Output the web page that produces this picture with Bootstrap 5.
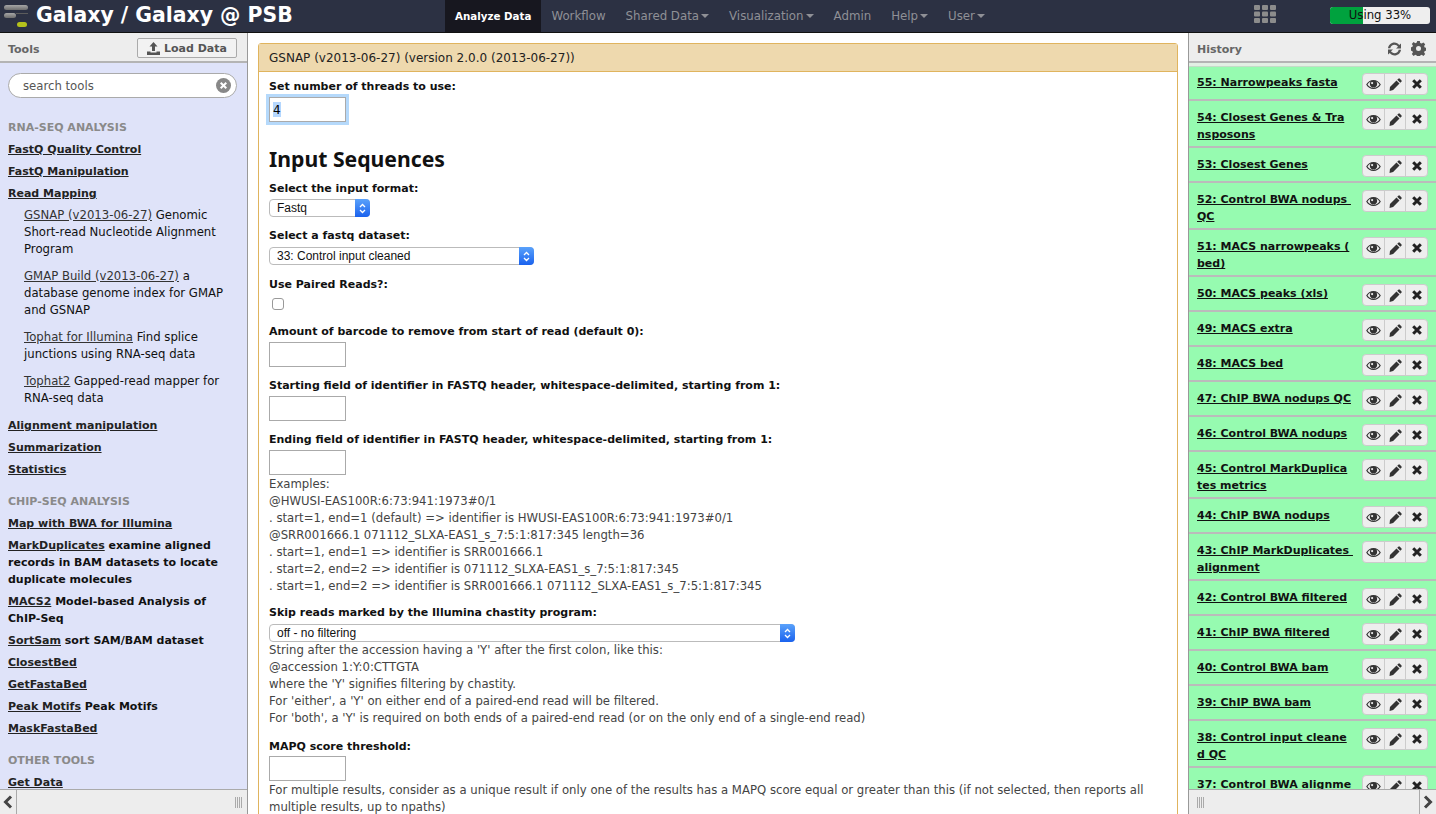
<!DOCTYPE html>
<html lang="en">
<head>
  <meta charset="UTF-8" />
  <title>Galaxy / Galaxy @ PSB</title>
  <link href="https://cdn.jsdelivr.net/npm/bootstrap@5.3.3/dist/css/bootstrap.min.css" rel="stylesheet" />
  <style>
    html, body { height: 100%; }
    body { font-family: "DejaVu Sans", "Noto Sans", sans-serif; font-size: 11.7px; line-height: 17px; color: #111; overflow: hidden; display: flex; flex-direction: column; }

    /* masthead */
    .gx-top { height: 33px; flex: none; background: #2c3143; border-bottom: 1px solid #111; padding: 0; align-items: flex-start; flex-wrap: nowrap; }
    .gx-logo { margin: 4px 8px 0 4px; flex: none; }
    .gx-brand { width: 409px; flex: none; font-size: 20.4px; line-height: 30px; font-weight: 700; color: #fff; white-space: nowrap; }
    .gx-top .navbar-nav .nav-link { height: 32px; padding: 8px 10px 6px; font-size: 11.8px; line-height: 17px; color: #8f9096; white-space: nowrap; }
    .gx-top .navbar-nav .nav-link.active { background: #17171f; color: #fff; font-weight: 700; font-size: 10.3px; }
    .gx-top .dropdown-toggle::after { border-top-width: 4px; border-left-width: 4px; border-right-width: 4px; margin-left: 2px; vertical-align: 2px; }
    .gx-grid { margin-left: auto; margin-top: 5px; flex: none; }
    .gx-quota { width: 100px; height: 17px; margin: 7px 6px 0 54px; flex: none; position: relative; background: #eee; border-radius: 3px; }
    .gx-quota .progress-bar { background: #00a23e; }
    .gx-quota-label { position: absolute; inset: 0; text-align: center; line-height: 17px; color: #111; font-size: 11.7px; }

    /* three columns */
    .gx-cols { flex: 1; min-height: 0; }
    .gx-side { width: 248px; flex: none; display: flex; flex-direction: column; min-height: 0; }
    .gx-side-left { border-right: 1px solid #999; }
    .gx-side-right { width: 248px; border-left: 1px solid #999; }
    .gx-head { height: 30px; flex: none; background: #ededed; border-bottom: 2px solid #b4b4b4; padding: 4px 10px 0 8px; font-size: 11px; font-weight: 700; color: #666; }
    .gx-loadbtn { width: 100px; height: 20px; padding: 0; margin-top: -2px; font-size: 11px; line-height: 17px; font-weight: 700; color: #555; background: #f2f2f2; border: 1px solid #aaa; border-radius: 2px; }
    .gx-hicons { margin-top: -1px; gap: 9px; }
    .gx-foot { height: 25px; flex: none; background: #ededed; border-top: 1px solid #aaa; }
    .gx-arrow { width: 17px; color: #444; }
    .gx-arrow-l { border-right: 1px solid #aaa; }
    .gx-arrow-r { border-left: 1px solid #aaa; }

    /* tools */
    .gx-tools { flex: 1; min-height: 0; overflow: hidden; background: #dfe3f9; padding: 10px 10px 0 8px; }
    .gx-search { height: 25px; margin-bottom: 21px; border: 1px solid #aaa; border-radius: 13px; background: #fff; padding: 0 5px 0 14px; color: #555; }
    .gx-search span { padding-top: 1px; }
    .gx-tools h6 { font-size: 11px; line-height: 17px; font-weight: 700; color: #8a8a8a; text-transform: uppercase; margin: 0 0 5px; }
    .gx-tools a { color: #222; }
    .gx-sect { margin-bottom: 5px; font-size: 11px; font-weight: 700; }
    .gx-tool { margin: 0 0 10px 16px; }
    .gx-tool a { color: #333; }
    .gx-tools h6.gx-sect-gap { margin-top: 15px; }

    /* centre */
    .gx-main { flex: 1; min-width: 0; background: #fff; padding: 10px 10px 0; overflow: hidden; }
    .gx-panel { height: 1000px; border: 1px solid #e0b45e; border-radius: 3px 3px 0 0; }
    .gx-panel-head { height: 28px; background: #eed9ae; border-bottom: 1px solid #e0b45e; padding: 6px 10px 4px; font-size: 12px; color: #222; }
    .gx-panel-body { padding: 6px 10px; }
    .gx-label { display: block; font-size: 11px; font-weight: 700; margin: 0 0 2px; color: #111; }
    .gx-field { margin-bottom: 10px; }
    .gx-field-sel { margin-bottom: 11px; }
    .gx-field-check { margin-bottom: 13px; }
    .gx-field-skip { margin-bottom: 9px; }
    .gx-label-tight { margin-bottom: 1px; }
    .gx-input { display: block; width: 77px; height: 25px; border: 1px solid #aaa; border-radius: 0; padding: 1px 3px; font-size: 12px; outline: 0; }
    .gx-input-focus { box-shadow: 0 0 0 3px #b5d9fb; background: #fff linear-gradient(#b5d7fe, #b5d7fe) no-repeat 3px 4px / 8px 15px; }
    .gx-title { font-family: "Noto Sans", sans-serif; font-size: 21.2px; line-height: 28px; font-weight: 700; margin: 23px 0 7px; color: #111; }
    .gx-help { color: #444; line-height: 17px; }
    .gx-help-gap { margin-top: 1px; }
    .gx-selwrap { position: relative; height: 18px; margin-top: 2px; }
    .gx-select { width: 100%; height: 18px; display: block; padding: 0 20px 0 7px; font-family: "Liberation Sans", sans-serif; font-size: 12px; line-height: 16px; color: #111; border: 1px solid #bbb; border-radius: 4px; background: #fff; appearance: none; }
    .gx-selbtn { position: absolute; right: 0; top: 0; width: 15px; height: 18px; border-radius: 0 4px 4px 0; background: linear-gradient(#5aa2fb, #1a62ee); display: flex; align-items: center; justify-content: center; }
    .gx-w-fmt { width: 101px; }
    .gx-w-data { width: 265px; margin-top: 3px; }
    .gx-w-skip { width: 526px; margin-top: 3px; }
    .gx-check { display: block; width: 12px; height: 12px; margin: 5px 0 0 3px; border: 1px solid #999; border-radius: 3px; appearance: none; background: #fff; }

    /* history */
    .gx-hist { flex: 1; min-height: 0; overflow: hidden; background: #96fbb0; border-top: 3px solid #e2efe4; }
    .gx-item { padding: 7px 8px 4px 8px; border-bottom: 2px solid #bbb; }
    .gx-item:first-child { padding-top: 6px; border-top: 1px solid #c4dcc8; }
    .gx-item a { color: #111; font-size: 11px; font-weight: 700; text-decoration: underline; flex: 1; min-width: 0; margin: 1px 0 -1px; }
    .gx-btns { flex: none; width: 66px; height: 22px; margin-left: 5px; background: #eee; border: 1px solid #ccc; border-radius: 4px; }
    .gx-btns span { flex: 1; display: flex; align-items: center; justify-content: center; border-left: 1px solid #ccc; }
    .gx-btns span:first-child { border-left: 0; }
  </style>
</head>
<body>
  <svg width="0" height="0" class="position-absolute">
    <symbol id="i-eye" viewBox="0 0 16 12"><path fill="#333" d="M8 1C4.600 1 1.800 3 0 6c1.800 3 4.600 5 8 5s6.200-2 8-5c-1.800-3-4.600-5-8-5zm0 8.800C5.500 9.800 3 8.400 1.500 6 2.400 4.500 3.600 3.500 5 2.800 4.400 3.500 4 4.400 4 5.400c0 2.200 1.800 4 4 4s4-1.800 4-4c0-1-.4-1.900-1-2.600 1.400.7 2.600 1.700 3.500 3.200C13 8.400 10.500 9.800 8 9.800zM6.500 3.200a1.200 1.200 0 1 1 0 2.400 1.200 1.200 0 0 1 0-2.400z"/></symbol>
    <symbol id="i-pen" viewBox="0 0 12 12"><path fill="#333" d="M8.600.6a1 1 0 0 1 1.400 0l1.400 1.400a1 1 0 0 1 0 1.400l-1 1L7.600 1.600zM6.900 2.300l2.800 2.800-5.900 5.900L.5 11.900.9 8.300z"/></symbol>
    <symbol id="i-x" viewBox="0 0 10 10"><path fill="none" stroke="#222" stroke-width="3" d="M1.200 1.200l7.600 7.600M8.800 1.200L1.200 8.800"/></symbol>
  </svg>

  <nav class="navbar navbar-expand gx-top">
    <svg class="gx-logo" width="24" height="24" viewBox="0 0 24 24">
      <defs><linearGradient id="gx-bar" x1="0" y1="0" x2="0" y2="1"><stop offset="0" stop-color="#a6a6a6"/><stop offset="1" stop-color="#6e6e6e"/></linearGradient></defs>
      <rect x="0" y="1" width="24" height="5" rx="2.500" fill="url(#gx-bar)"/>
      <rect x="0" y="9" width="12" height="5" rx="2.500" fill="url(#gx-bar)"/>
      <rect x="12" y="9" width="12" height="1" fill="#5c5c5c"/>
      <rect x="13" y="18" width="10" height="5" rx="2.500" fill="#b5c21c"/>
    </svg>
    <div class="gx-brand">Galaxy / Galaxy @ PSB</div>
    <ul class="navbar-nav">
      <li class="nav-item"><a class="nav-link active" href="#">Analyze Data</a></li>
      <li class="nav-item"><a class="nav-link" href="#">Workflow</a></li>
      <li class="nav-item"><a class="nav-link dropdown-toggle" href="#">Shared Data</a></li>
      <li class="nav-item"><a class="nav-link dropdown-toggle" href="#">Visualization</a></li>
      <li class="nav-item"><a class="nav-link" href="#">Admin</a></li>
      <li class="nav-item"><a class="nav-link dropdown-toggle" href="#">Help</a></li>
      <li class="nav-item"><a class="nav-link dropdown-toggle" href="#">User</a></li>
    </ul>
    <svg class="gx-grid" width="22" height="18" viewBox="0 0 22 18" fill="#8c8c8c">
      <rect x="0" y="0" width="6" height="5" rx="1"/><rect x="8" y="0" width="6" height="5" rx="1"/><rect x="16" y="0" width="6" height="5" rx="1"/>
      <rect x="0" y="6.500" width="6" height="5" rx="1"/><rect x="8" y="6.500" width="6" height="5" rx="1"/><rect x="16" y="6.500" width="6" height="5" rx="1"/>
      <rect x="0" y="13" width="6" height="5" rx="1"/><rect x="8" y="13" width="6" height="5" rx="1"/><rect x="16" y="13" width="6" height="5" rx="1"/>
    </svg>
    <div class="progress gx-quota">
      <div class="progress-bar" style="width: 33%"></div>
      <div class="gx-quota-label">Using 33%</div>
    </div>
  </nav>

  <div class="d-flex gx-cols">
    <aside class="gx-side gx-side-left">
      <div class="gx-head d-flex align-items-center justify-content-between">
        <span>Tools</span>
        <button class="btn gx-loadbtn d-flex align-items-center justify-content-center gap-1" type="button">
          <svg width="13" height="13" viewBox="0 0 13 13"><path fill="#555" d="M6.500 0L2.500 4.500H5V9H8V4.500H10.500zM0 9.500h3.500v1h6v-1H13V13H0z"/></svg>
          Load Data
        </button>
      </div>
      <div class="gx-tools">
        <div class="gx-search d-flex align-items-center justify-content-between">
          <span>search tools</span>
          <svg width="15" height="15" viewBox="0 0 15 15"><circle cx="7.500" cy="7.500" r="7.500" fill="#888"/><path stroke="#fff" stroke-width="2" d="M4.700 4.700l5.600 5.600M10.300 4.700l-5.600 5.600"/></svg>
        </div>
        <h6>RNA-Seq Analysis</h6>
        <div class="gx-sect"><a href="#">FastQ Quality Control</a></div>
        <div class="gx-sect"><a href="#">FastQ Manipulation</a></div>
        <div class="gx-sect"><a href="#">Read Mapping</a></div>
        <div class="gx-tool"><a href="#">GSNAP (v2013-06-27)</a> Genomic Short-read Nucleotide Alignment Program</div>
        <div class="gx-tool"><a href="#">GMAP Build (v2013-06-27)</a> a database genome index for GMAP and GSNAP</div>
        <div class="gx-tool"><a href="#">Tophat for Illumina</a> Find splice junctions using RNA-seq data</div>
        <div class="gx-tool"><a href="#">Tophat2</a> Gapped-read mapper for RNA-seq data</div>
        <div class="gx-sect"><a href="#">Alignment manipulation</a></div>
        <div class="gx-sect"><a href="#">Summarization</a></div>
        <div class="gx-sect"><a href="#">Statistics</a></div>
        <h6 class="gx-sect-gap">ChIP-Seq Analysis</h6>
        <div class="gx-sect"><a href="#">Map with BWA for Illumina</a></div>
        <div class="gx-sect"><a href="#">MarkDuplicates</a> examine aligned records in BAM datasets to locate duplicate molecules</div>
        <div class="gx-sect"><a href="#">MACS2</a> Model-based Analysis of ChIP-Seq</div>
        <div class="gx-sect"><a href="#">SortSam</a> sort SAM/BAM dataset</div>
        <div class="gx-sect"><a href="#">ClosestBed</a></div>
        <div class="gx-sect"><a href="#">GetFastaBed</a></div>
        <div class="gx-sect"><a href="#">Peak Motifs</a> Peak Motifs</div>
        <div class="gx-sect"><a href="#">MaskFastaBed</a></div>
        <h6 class="gx-sect-gap">Other Tools</h6>
        <div class="gx-sect"><a href="#">Get Data</a></div>
      </div>
      <div class="gx-foot d-flex justify-content-between align-items-stretch">
        <div class="gx-arrow gx-arrow-l d-flex align-items-center justify-content-center">
          <svg width="10" height="14" viewBox="0 0 10 14"><path fill="none" stroke="#444" stroke-width="3" d="M8 1.500L2.500 7 8 12.500"/></svg>
        </div>
        <svg class="align-self-center me-1" width="8" height="11" viewBox="0 0 8 11"><path stroke="#aaa" d="M.5 0v11M2.500 0v11M4.500 0v11M6.500 0v11"/></svg>
      </div>
    </aside>

    <main class="gx-main">
      <div class="gx-panel">
        <div class="gx-panel-head">GSNAP (v2013-06-27) (version 2.0.0 (2013-06-27))</div>
        <form class="gx-panel-body">
          <div><label class="gx-label">Set number of threads to use:</label>
            <input class="gx-input gx-input-focus" type="text" value="4" /></div>
          <h3 class="gx-title">Input Sequences</h3>
          <div class="gx-field"><label class="gx-label">Select the input format:</label>
            <div class="gx-selwrap gx-w-fmt"><select class="gx-select"><option>Fastq</option></select><span class="gx-selbtn"><svg width="7" height="11" viewBox="0 0 7 11"><path fill="none" stroke="#fff" stroke-width="1.300" d="M1 4l2.500-2.500L6 4M1 7l2.500 2.500L6 7"/></svg></span></div></div>
          <div class="gx-field-sel"><label class="gx-label">Select a fastq dataset:</label>
            <div class="gx-selwrap gx-w-data"><select class="gx-select"><option>33: Control input cleaned</option></select><span class="gx-selbtn"><svg width="7" height="11" viewBox="0 0 7 11"><path fill="none" stroke="#fff" stroke-width="1.300" d="M1 4l2.500-2.500L6 4M1 7l2.500 2.500L6 7"/></svg></span></div></div>
          <div class="gx-field-check"><label class="gx-label">Use Paired Reads?:</label>
            <input class="gx-check" type="checkbox" /></div>
          <div class="gx-field"><label class="gx-label">Amount of barcode to remove from start of read (default 0):</label>
            <input class="gx-input" type="text" /></div>
          <div class="gx-field"><label class="gx-label">Starting field of identifier in FASTQ header, whitespace-delimited, starting from 1:</label>
            <input class="gx-input" type="text" /></div>
          <div class="gx-field-skip"><label class="gx-label">Ending field of identifier in FASTQ header, whitespace-delimited, starting from 1:</label>
            <input class="gx-input" type="text" />
            <div class="gx-help gx-help-gap">Examples:<br>@HWUSI-EAS100R:6:73:941:1973#0/1<br>. start=1, end=1 (default) =&gt; identifier is HWUSI-EAS100R:6:73:941:1973#0/1<br>@SRR001666.1 071112_SLXA-EAS1_s_7:5:1:817:345 length=36<br>. start=1, end=1 =&gt; identifier is SRR001666.1<br>. start=2, end=2 =&gt; identifier is 071112_SLXA-EAS1_s_7:5:1:817:345<br>. start=1, end=2 =&gt; identifier is SRR001666.1 071112_SLXA-EAS1_s_7:5:1:817:345</div></div>
          <div class="gx-field-sel"><label class="gx-label">Skip reads marked by the Illumina chastity program:</label>
            <div class="gx-selwrap gx-w-skip"><select class="gx-select"><option>off - no filtering</option></select><span class="gx-selbtn"><svg width="7" height="11" viewBox="0 0 7 11"><path fill="none" stroke="#fff" stroke-width="1.300" d="M1 4l2.500-2.500L6 4M1 7l2.500 2.500L6 7"/></svg></span></div>
            <div class="gx-help">String after the accession having a 'Y' after the first colon, like this:<br>@accession 1:Y:0:CTTGTA<br>where the 'Y' signifies filtering by chastity.<br>For 'either', a 'Y' on either end of a paired-end read will be filtered.<br>For 'both', a 'Y' is required on both ends of a paired-end read (or on the only end of a single-end read)</div></div>
          <div class="gx-field"><label class="gx-label gx-label-tight">MAPQ score threshold:</label>
            <input class="gx-input" type="text" />
            <div class="gx-help gx-help-gap">For multiple results, consider as a unique result if only one of the results has a MAPQ score equal or greater than this (if not selected, then reports all multiple results, up to npaths)</div></div>
        </form>
      </div>
    </main>

    <aside class="gx-side gx-side-right">
      <div class="gx-head d-flex align-items-center justify-content-between">
        <span>History</span>
        <span class="d-flex align-items-center gx-hicons">
          <svg width="15" height="15" viewBox="0 0 15 15"><path fill="#555" d="M7.500 1.500c2 0 3.700 1 4.700 2.500L14 2.500V7.500H9l2-1.800C10.300 4.600 9 3.800 7.500 3.800 5.400 3.800 3.700 5.300 3.300 7.300H1C1.400 4 4.100 1.500 7.500 1.500zM1 8.500h5l-2 1.800c.7 1.100 2 1.900 3.500 1.900 2.100 0 3.800-1.500 4.200-3.500H14c-.4 3.300-3.100 5.800-6.500 5.800-2 0-3.700-1-4.700-2.500L1 13.500z"/></svg>
          <svg width="15" height="15" viewBox="0 0 15 15"><path fill="#555" d="M6.200 0h2.600l.4 2 1.500.6 1.700-1.100 1.800 1.800-1.100 1.700.6 1.500 2 .4v2.600l-2 .4-.6 1.500 1.100 1.700-1.800 1.800-1.700-1.100-1.500.6-.4 2H6.200l-.4-2-1.500-.6-1.700 1.100-1.800-1.800 1.100-1.700-.6-1.500-2-.4V6.500l2-.4.6-1.500-1.100-1.700 1.800-1.800 1.700 1.100 1.500-.6zM7.500 5a2.500 2.500 0 1 0 0 5 2.500 2.500 0 0 0 0-5z"/></svg>
        </span>
      </div>
      <div class="gx-hist">
        <div class="gx-item d-flex"><a href="#">55: Narrowpeaks fasta</a><div class="gx-btns d-flex"><span><svg width="15" height="11"><use href="#i-eye"/></svg></span><span><svg width="13" height="13"><use href="#i-pen"/></svg></span><span><svg width="10" height="10"><use href="#i-x"/></svg></span></div></div>
        <div class="gx-item d-flex"><a href="#">54: Closest Genes &amp; Tra<br>nsposons</a><div class="gx-btns d-flex"><span><svg width="15" height="11"><use href="#i-eye"/></svg></span><span><svg width="13" height="13"><use href="#i-pen"/></svg></span><span><svg width="10" height="10"><use href="#i-x"/></svg></span></div></div>
        <div class="gx-item d-flex"><a href="#">53: Closest Genes</a><div class="gx-btns d-flex"><span><svg width="15" height="11"><use href="#i-eye"/></svg></span><span><svg width="13" height="13"><use href="#i-pen"/></svg></span><span><svg width="10" height="10"><use href="#i-x"/></svg></span></div></div>
        <div class="gx-item d-flex"><a href="#">52: Control BWA nodups&nbsp;<br>QC</a><div class="gx-btns d-flex"><span><svg width="15" height="11"><use href="#i-eye"/></svg></span><span><svg width="13" height="13"><use href="#i-pen"/></svg></span><span><svg width="10" height="10"><use href="#i-x"/></svg></span></div></div>
        <div class="gx-item d-flex"><a href="#">51: MACS narrowpeaks (<br>bed)</a><div class="gx-btns d-flex"><span><svg width="15" height="11"><use href="#i-eye"/></svg></span><span><svg width="13" height="13"><use href="#i-pen"/></svg></span><span><svg width="10" height="10"><use href="#i-x"/></svg></span></div></div>
        <div class="gx-item d-flex"><a href="#">50: MACS peaks (xls)</a><div class="gx-btns d-flex"><span><svg width="15" height="11"><use href="#i-eye"/></svg></span><span><svg width="13" height="13"><use href="#i-pen"/></svg></span><span><svg width="10" height="10"><use href="#i-x"/></svg></span></div></div>
        <div class="gx-item d-flex"><a href="#">49: MACS extra</a><div class="gx-btns d-flex"><span><svg width="15" height="11"><use href="#i-eye"/></svg></span><span><svg width="13" height="13"><use href="#i-pen"/></svg></span><span><svg width="10" height="10"><use href="#i-x"/></svg></span></div></div>
        <div class="gx-item d-flex"><a href="#">48: MACS bed</a><div class="gx-btns d-flex"><span><svg width="15" height="11"><use href="#i-eye"/></svg></span><span><svg width="13" height="13"><use href="#i-pen"/></svg></span><span><svg width="10" height="10"><use href="#i-x"/></svg></span></div></div>
        <div class="gx-item d-flex"><a href="#">47: ChIP BWA nodups QC</a><div class="gx-btns d-flex"><span><svg width="15" height="11"><use href="#i-eye"/></svg></span><span><svg width="13" height="13"><use href="#i-pen"/></svg></span><span><svg width="10" height="10"><use href="#i-x"/></svg></span></div></div>
        <div class="gx-item d-flex"><a href="#">46: Control BWA nodups</a><div class="gx-btns d-flex"><span><svg width="15" height="11"><use href="#i-eye"/></svg></span><span><svg width="13" height="13"><use href="#i-pen"/></svg></span><span><svg width="10" height="10"><use href="#i-x"/></svg></span></div></div>
        <div class="gx-item d-flex"><a href="#">45: Control MarkDuplica<br>tes metrics</a><div class="gx-btns d-flex"><span><svg width="15" height="11"><use href="#i-eye"/></svg></span><span><svg width="13" height="13"><use href="#i-pen"/></svg></span><span><svg width="10" height="10"><use href="#i-x"/></svg></span></div></div>
        <div class="gx-item d-flex"><a href="#">44: ChIP BWA nodups</a><div class="gx-btns d-flex"><span><svg width="15" height="11"><use href="#i-eye"/></svg></span><span><svg width="13" height="13"><use href="#i-pen"/></svg></span><span><svg width="10" height="10"><use href="#i-x"/></svg></span></div></div>
        <div class="gx-item d-flex"><a href="#">43: ChIP MarkDuplicates&nbsp;<br>alignment</a><div class="gx-btns d-flex"><span><svg width="15" height="11"><use href="#i-eye"/></svg></span><span><svg width="13" height="13"><use href="#i-pen"/></svg></span><span><svg width="10" height="10"><use href="#i-x"/></svg></span></div></div>
        <div class="gx-item d-flex"><a href="#">42: Control BWA filtered</a><div class="gx-btns d-flex"><span><svg width="15" height="11"><use href="#i-eye"/></svg></span><span><svg width="13" height="13"><use href="#i-pen"/></svg></span><span><svg width="10" height="10"><use href="#i-x"/></svg></span></div></div>
        <div class="gx-item d-flex"><a href="#">41: ChIP BWA filtered</a><div class="gx-btns d-flex"><span><svg width="15" height="11"><use href="#i-eye"/></svg></span><span><svg width="13" height="13"><use href="#i-pen"/></svg></span><span><svg width="10" height="10"><use href="#i-x"/></svg></span></div></div>
        <div class="gx-item d-flex"><a href="#">40: Control BWA bam</a><div class="gx-btns d-flex"><span><svg width="15" height="11"><use href="#i-eye"/></svg></span><span><svg width="13" height="13"><use href="#i-pen"/></svg></span><span><svg width="10" height="10"><use href="#i-x"/></svg></span></div></div>
        <div class="gx-item d-flex"><a href="#">39: ChIP BWA bam</a><div class="gx-btns d-flex"><span><svg width="15" height="11"><use href="#i-eye"/></svg></span><span><svg width="13" height="13"><use href="#i-pen"/></svg></span><span><svg width="10" height="10"><use href="#i-x"/></svg></span></div></div>
        <div class="gx-item d-flex"><a href="#">38: Control input cleane<br>d QC</a><div class="gx-btns d-flex"><span><svg width="15" height="11"><use href="#i-eye"/></svg></span><span><svg width="13" height="13"><use href="#i-pen"/></svg></span><span><svg width="10" height="10"><use href="#i-x"/></svg></span></div></div>
        <div class="gx-item d-flex"><a href="#">37: Control BWA alignme<br>nt</a><div class="gx-btns d-flex"><span><svg width="15" height="11"><use href="#i-eye"/></svg></span><span><svg width="13" height="13"><use href="#i-pen"/></svg></span><span><svg width="10" height="10"><use href="#i-x"/></svg></span></div></div>
      </div>
      <div class="gx-foot d-flex justify-content-between align-items-stretch">
        <svg class="align-self-center ms-2" width="8" height="11" viewBox="0 0 8 11"><path stroke="#aaa" d="M.5 0v11M2.500 0v11M4.500 0v11M6.500 0v11"/></svg>
        <div class="gx-arrow gx-arrow-r d-flex align-items-center justify-content-center">
          <svg width="10" height="14" viewBox="0 0 10 14"><path fill="none" stroke="#444" stroke-width="3" d="M2 1.500L7.500 7 2 12.500"/></svg>
        </div>
      </div>
    </aside>
  </div>
  <script src="https://cdn.jsdelivr.net/npm/bootstrap@5.3.3/dist/js/bootstrap.bundle.min.js"></script>
</body>
</html>
